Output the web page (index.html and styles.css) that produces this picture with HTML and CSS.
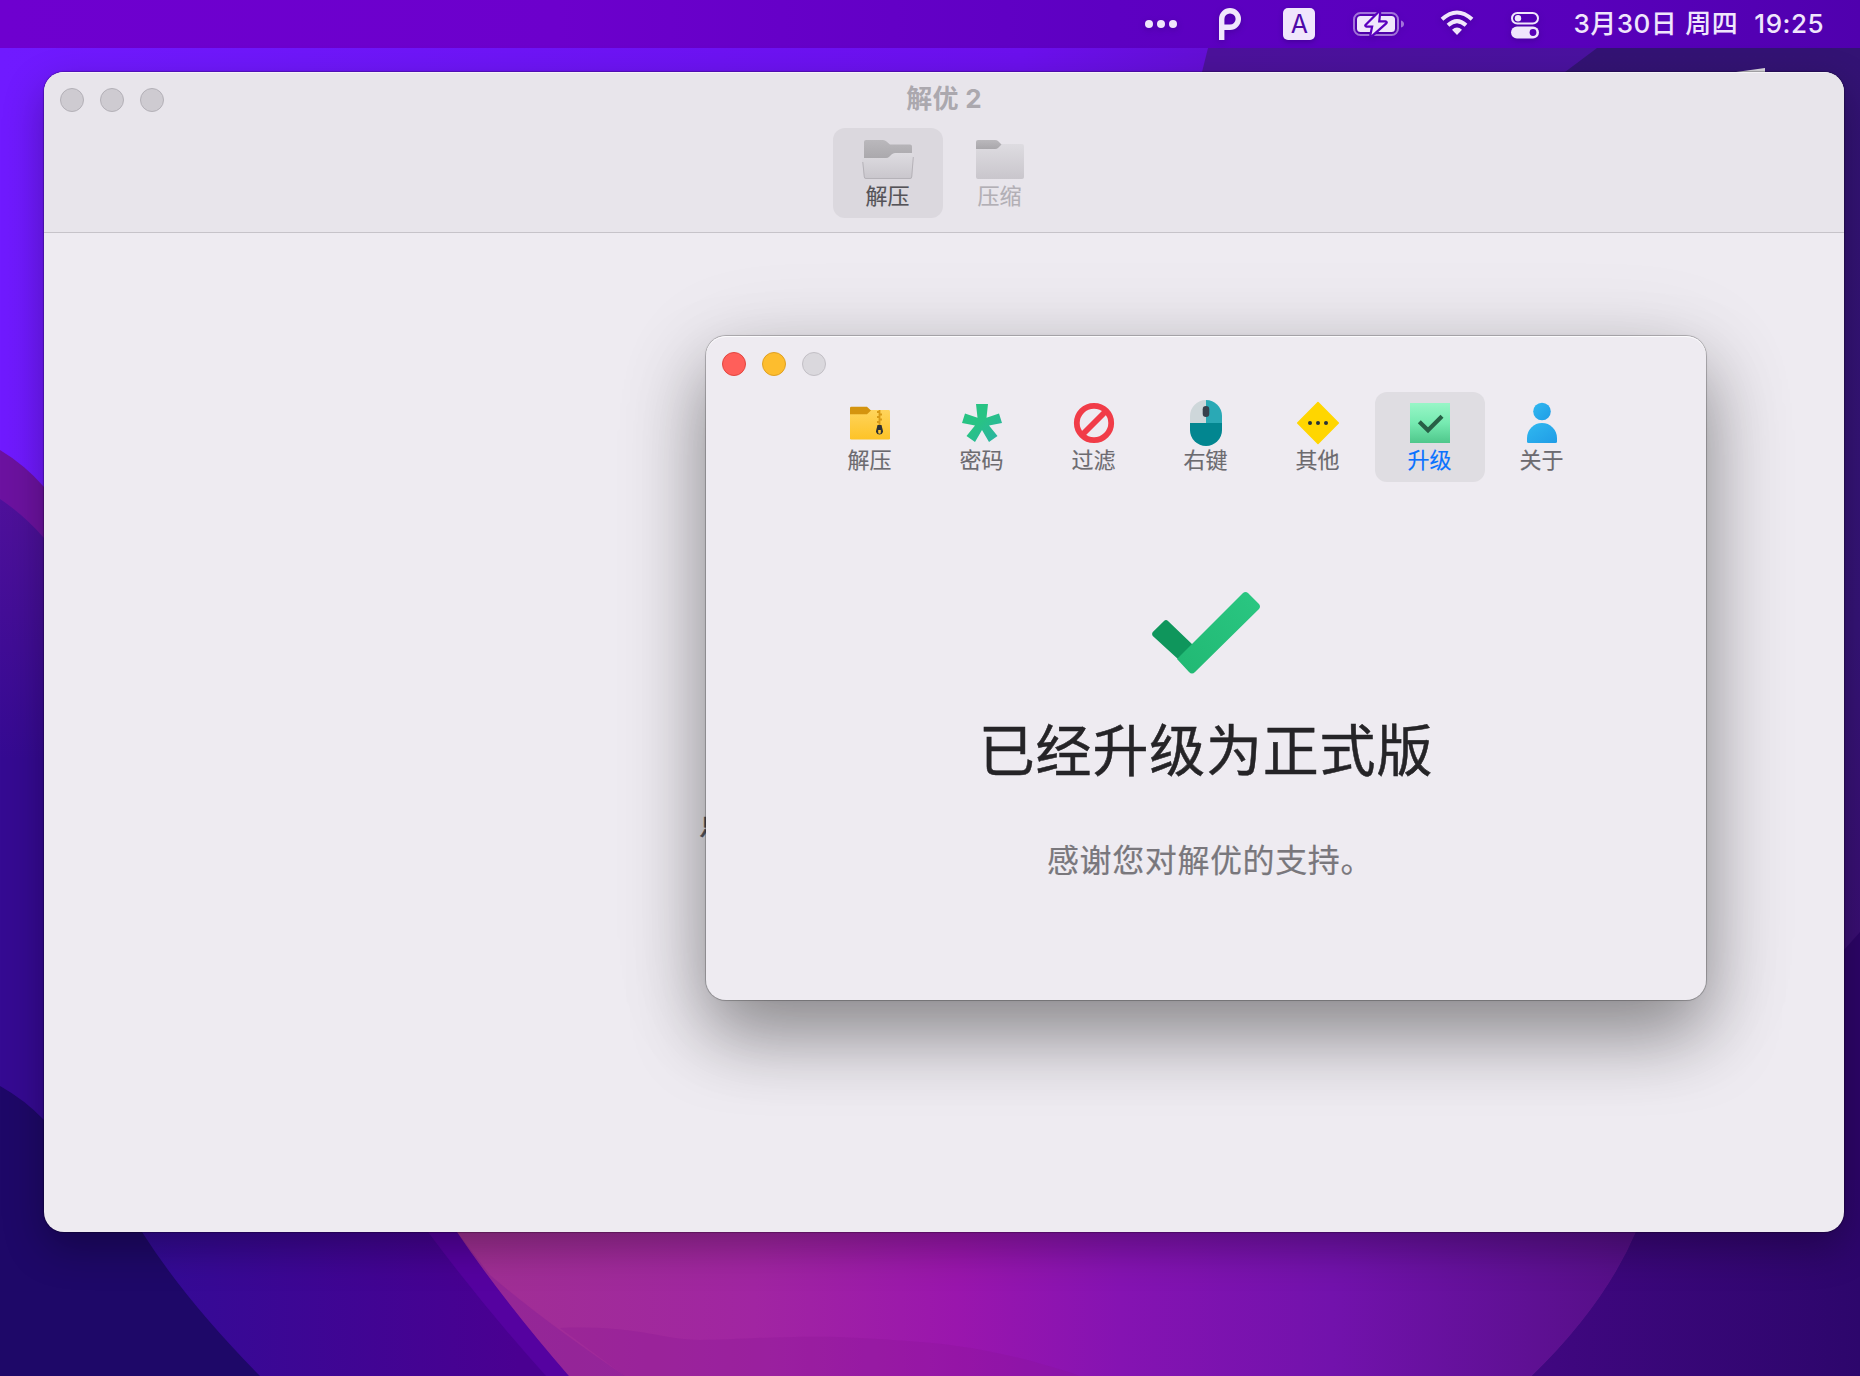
FILE: index.html
```html
<!DOCTYPE html>
<html lang="zh-CN">
<head>
<meta charset="utf-8">
<title>解优 2</title>
<link rel="stylesheet" href="styles.css">
</head>
<body>
<div class="desktop">
  <svg class="wallpaper" viewBox="0 0 1860 1376" aria-hidden="true">
    <defs>
      <linearGradient id="sky" x1="0" x2="1"><stop offset="0" stop-color="#701aff"/><stop offset=".55" stop-color="#6c10ee"/><stop offset=".65" stop-color="#640fd6"/></linearGradient>
      <linearGradient id="hillLeft" gradientUnits="userSpaceOnUse" x1="0" y1="500" x2="0" y2="760"><stop offset="0" stop-color="#4f119b"/><stop offset="1" stop-color="#350a92"/></linearGradient>
      <linearGradient id="valley" gradientUnits="userSpaceOnUse" x1="142" y1="0" x2="520" y2="0"><stop offset="0" stop-color="#330b96"/><stop offset="1" stop-color="#4a0091"/></linearGradient>
      <linearGradient id="pink" gradientUnits="userSpaceOnUse" x1="460" y1="0" x2="1640" y2="0"><stop offset="0" stop-color="#a03093"/><stop offset=".25" stop-color="#a125a2"/><stop offset=".42" stop-color="#9a16ad"/><stop offset=".56" stop-color="#8513b2"/><stop offset=".74" stop-color="#7212ac"/><stop offset="1" stop-color="#540f86"/></linearGradient>
      <linearGradient id="dusk" gradientUnits="userSpaceOnUse" x1="1540" y1="0" x2="1860" y2="0"><stop offset="0" stop-color="#400780"/><stop offset="1" stop-color="#2d066c"/></linearGradient>
      <linearGradient id="ridge" gradientUnits="userSpaceOnUse" x1="1210" y1="0" x2="1600" y2="0"><stop offset="0" stop-color="#4c129b"/><stop offset="1" stop-color="#4a12a0"/></linearGradient>
      <linearGradient id="rightEdge" gradientUnits="userSpaceOnUse" x1="0" y1="48" x2="0" y2="940"><stop offset="0" stop-color="#331374"/><stop offset=".65" stop-color="#361478"/><stop offset="1" stop-color="#3a0f74"/></linearGradient>
    </defs>
    <path fill="url(#sky)" d="M0 0H1860V1376H0z"/>
    <path fill="url(#ridge)" d="M1220 0L1208 48L1202 72L1160 300H1860V0z"/>
    <path fill="url(#rightEdge)" d="M1660 0L1597 48L1565 72L1400 300V1376H1860V0z"/>
    <path fill="#2d0568" d="M1800 970L1844 950L1860 932V1376H1800z"/>
    <path fill="#6c12a0" d="M0 450Q25 465 44 487L460 1232H0z"/>
    <path fill="url(#hillLeft)" d="M0 499Q24 515 44 538L428 1232H0z"/>
    <path fill="url(#valley)" d="M90 1180H430Q480 1290 560 1376H90z"/>
    <path fill="#5502a0" d="M428 1232L400 1180H500L600 1376H546Q483 1306 428 1232z"/>
    <path fill="url(#pink)" d="M430 1180L457 1232Q503 1300 569 1376H1532Q1605 1305 1636 1232L1660 1180z"/>
    <path fill="#7c1698" opacity=".3" d="M457 1232Q503 1300 569 1376H625Q545 1322 490 1275z"/>
    <path fill="#861395" opacity=".25" d="M560 1328C640 1325 660 1340 700 1340S800 1334 860 1338S980 1342 1080 1376H625z"/>
    <path fill="url(#dusk)" d="M1650 1180L1636 1232Q1605 1305 1532 1376H1860V1180z"/>
    <path fill="#1e0868" d="M0 1086Q25 1100 44 1120Q110 1185 142 1232Q185 1300 260 1376H0z"/>
    <path fill="#dcdadf" d="M1736 72L1765 68V76H1736z"/>
  </svg>

  <header class="menubar">
    <svg class="mb-dots" width="32" height="8" viewBox="0 0 32 8"><g fill="currentColor"><circle cx="4" cy="4" r="4"/><circle cx="16" cy="4" r="4"/><circle cx="28" cy="4" r="4"/></g></svg>
    <svg class="mb-p" width="22" height="32" viewBox="0 0 22 32"><path fill="none" stroke="currentColor" stroke-width="5.400" d="M2.700 32V11A8.300 8.300 0 1 1 11 19.300H2.700"/></svg>
    <span class="mb-input">A</span>
    <svg class="mb-battery" width="51" height="26" viewBox="0 0 51 26">
      <rect x="1" y="2" width="44" height="22" rx="6.5" fill="none" stroke="currentColor" stroke-width="2" opacity=".5"/>
      <path d="M48 9.500Q51 10.500 51 13T48 16.500z" fill="currentColor" opacity=".5"/>
      <rect x="4" y="5" width="38" height="16" rx="3.500" fill="currentColor"/>
      <path d="M26 2L13.500 14.500H20.500L18.500 24L32.500 11.500H25z" fill="currentColor" stroke="#5b00bf" stroke-width="4.500" paint-order="stroke" stroke-linejoin="round"/>
    </svg>
    <svg class="mb-wifi" width="34" height="26" viewBox="0 0 34 26"><g fill="none" stroke="currentColor" stroke-width="4"><path d="M2 9.300Q17-4.300 32 9.300"/><path d="M8 15.300Q17 7 26 15.300"/></g><path fill="currentColor" d="M12 19.700Q17 15.500 22 19.700L17 25z"/></svg>
    <svg class="mb-control" width="28" height="27" viewBox="0 0 28 27"><rect x="1" y="1" width="26" height="10.500" rx="5.250" fill="none" stroke="currentColor" stroke-width="2"/><circle cx="7" cy="6.200" r="3.200" fill="currentColor"/><rect y="14.500" width="28" height="12" rx="6" fill="currentColor"/><circle cx="22" cy="20.500" r="3.400" fill="#5700b8"/></svg>
    <div class="clock"><span>3月30日</span><span>周四</span><span>19:25</span></div>
  </header>

  <section class="window main-window">
    <div class="titlebar">
      <div class="lights"><i></i><i></i><i></i></div>
      <h1>解优 2</h1>
      <nav class="toolbar">
        <div class="tool active">
          <svg width="52" height="40" viewBox="0 0 52 40">
            <defs><linearGradient id="g1" x2="0" y2="1"><stop stop-color="#bab8bc"/><stop offset="1" stop-color="#a9a7ab"/></linearGradient><linearGradient id="g2" x2="0" y2="1"><stop stop-color="#dedce1"/><stop offset="1" stop-color="#c9c6cc"/></linearGradient></defs>
            <path fill="url(#g1)" d="M2 20V2Q2 0 4 0H21Q23 0 24.500 1.500L28 4.500H48Q50 4.500 50 6.500V20z"/>
            <path fill="url(#g2)" d="M0 20Q0 18 2 18H24Q26 18 27.500 16.500L29.500 14.500Q31 13 33 13H50Q52 13 52 15L50 37Q50 39 48 39H4Q2 39 2 37z"/>
            <path fill="none" stroke="#b5b2b8" stroke-width="1" d="M.8 22L2.300 37Q2.500 38.500 4 38.500H48Q49.500 38.500 49.700 37L51.300 17"/>
          </svg><span>解压</span>
        </div>
        <div class="tool">
          <svg width="48" height="40" viewBox="0 0 48 40">
            <path fill="url(#g2)" d="M0 8L24 4H46Q48 4 48 6V37Q48 39 46 39H2Q0 39 0 37z"/>
            <path fill="url(#g1)" d="M0 9V2Q0 0 2 0H19Q21 0 22 1L25.500 4.500L22 8Q21 9 19 9z"/>
          </svg><span>压缩</span>
        </div>
      </nav>
    </div>
    <div class="drop-area"><p>点</p></div>
  </section>

  <section class="window dialog">
    <div class="lights"><i class="close"></i><i class="minimize"></i><i></i></div>
    <nav class="toolbar">
      <div class="tool">
        <svg width="40" height="48" viewBox="0 0 40 48">
          <defs><linearGradient id="y1" x2="0" y2="1"><stop stop-color="#ffd45c"/><stop offset="1" stop-color="#fdc327"/></linearGradient></defs>
          <rect y="11" width="40" height="29.500" rx="1.300" fill="url(#y1)"/>
          <path fill="#d4940f" d="M0 15.300V9Q0 7.700 1.300 7.700H17L21 11.500L17 15.300z"/>
          <path fill="none" stroke="#d89a16" stroke-width="1.800" d="M29.500 11V26M27 13H29.500M29.500 15.500H32M27 18H29.500M29.500 20.500H32M27 23H29.500"/>
          <path fill="#2c3035" fill-rule="evenodd" d="M27.500 26H31.500L33 32V33A3.700 3.700 0 0 1 26 33V32zM28.200 31V33.500A1.300 1.300 0 0 0 30.800 33.500V31z"/>
        </svg><span>解压</span>
      </div>
      <div class="tool">
        <svg width="40" height="48" viewBox="0 0 40 48">
          <defs><linearGradient id="s1" x2="1" y2="1"><stop offset=".45" stop-color="#28c384"/><stop offset="1" stop-color="#2bb1a8"/></linearGradient></defs>
          <path fill="url(#s1)" d="M14 5H26L24.500 18.800L37 14.500L40 24L27 26.500L35.500 37L27 43L20 31L13 43L4.500 37L13 26.500L0 24L3 14.500L15.500 18.800z"/>
        </svg><span>密码</span>
      </div>
      <div class="tool">
        <svg width="42" height="48" viewBox="0 0 42 48"><g fill="none" stroke="#f13c48" stroke-width="5.800"><circle cx="21" cy="24" r="17.200"/><path d="M9 36L33 12"/></g></svg><span>过滤</span>
      </div>
      <div class="tool">
        <svg width="32" height="48" viewBox="0 0 32 48">
          <path fill="#ced7da" d="M16 1V24H0V17A16 16 0 0 1 16 1z"/><path fill="#2aa9b5" d="M16 1A16 16 0 0 1 32 17V24H16z"/><path fill="#028690" d="M0 24H32V31A16 16 0 0 1 0 31z"/><rect x="12.700" y="7" width="6.600" height="11" rx="3.300" fill="#37404b"/>
        </svg><span>右键</span>
      </div>
      <div class="tool">
        <svg width="42" height="48" viewBox="0 0 42 48"><path fill="#ffd600" stroke="#ffd600" stroke-width="1.500" stroke-linejoin="round" d="M21 3.500L41.300 24L21 44.500L.7 24z"/><g fill="#263238"><circle cx="13" cy="24" r="2"/><circle cx="21" cy="24" r="2"/><circle cx="29" cy="24" r="2"/></g></svg><span>其他</span>
      </div>
      <div class="tool active">
        <svg width="40" height="48" viewBox="0 0 40 48">
          <defs><linearGradient id="k1" x2="0" y2="1"><stop stop-color="#98f6c7"/><stop offset=".5" stop-color="#76eab1"/><stop offset="1" stop-color="#4fc78b"/></linearGradient></defs>
          <path fill="url(#k1)" d="M0 4H40V44H0z"/><path fill="none" stroke="#285f46" stroke-width="4.200" d="M9.300 22.700L18 31.300L32 17.300"/>
        </svg><span>升级</span>
      </div>
      <div class="tool">
        <svg width="30" height="48" viewBox="0 0 30 48">
          <defs><linearGradient id="u1" x2="1" y2="1"><stop stop-color="#30b9f0"/><stop offset="1" stop-color="#209ce6"/></linearGradient></defs>
          <g fill="url(#u1)"><circle cx="15" cy="12.500" r="8.800"/><path d="M0 39A15 15 0 0 1 30 39V42.500Q30 44 28.500 44H1.500Q0 44 0 42.500z"/></g>
        </svg><span>关于</span>
      </div>
    </nav>
    <div class="upgrade">
      <svg width="108" height="84" viewBox="0 0 108 84">
        <defs><linearGradient id="c1" x1="1" y1="0" x2="0" y2="1"><stop stop-color="#2ac782"/><stop offset="1" stop-color="#21b873"/></linearGradient></defs>
        <path fill="#0f965c" d="M.8 45Q-.6 43 .8 41L12 30Q14 28 16 30L41 54L27 69z"/>
        <path fill="url(#c1)" d="M25 68L91 2Q93.500 0 96 2L107 13Q109 15.500 107 18L43 81Q40 84 37 81z"/>
      </svg>
      <h2>已经升级为正式版</h2>
      <p>感谢您对解优的支持。</p>
    </div>
  </section>
</div>
</body>
</html>
```

FILE: styles.css
```css
* { box-sizing: border-box; margin: 0; padding: 0; }
body { font-family: Inter, "Noto Sans CJK SC", sans-serif; }
svg { display: block; flex: none; }

.desktop { position: relative; width: 1860px; height: 1376px; overflow: hidden; }
.wallpaper { position: absolute; inset: 0; width: 1860px; height: 1376px; }

.menubar {
  position: relative;
  display: flex;
  justify-content: flex-end;
  align-items: center;
  height: 48px;
  padding-right: 36px;
  color: #f0e6fc;
  background: linear-gradient(90deg, #6e00cf 0%, #6c00cc 30%, #5d00c2 60%, #5800bb 85%, #5000ae 100%);
}
.menubar svg { filter: drop-shadow(0 2px 3px rgba(30, 0, 90, .3)); }
.mb-dots { margin-right: 42px; }
.mb-p { margin-right: 42px; }
.mb-input {
  width: 32px; height: 32px; margin-right: 38px;
  border-radius: 5px;
  background: #f0e6fc; color: #4d0aa8;
  font-size: 25px; line-height: 32px; text-align: center;
  box-shadow: 0 2px 5px rgba(30, 0, 90, .35);
}
.mb-battery { margin-right: 36px; }
.mb-wifi { margin-right: 37px; transform: translateY(-1px); }
.mb-control { margin: 2px 34px 0 0; }
.clock { display: flex; gap: 8px; font-size: 26px; font-weight: 500; line-height: 46px; letter-spacing: .5px; white-space: nowrap; }
.clock span:last-child { margin-left: 8px; }

.window { position: absolute; border-radius: 20px; background: #eeebf1; }
.main-window {
  left: 44px; top: 72px; width: 1800px; height: 1160px;
  overflow: hidden;
  box-shadow: 0 0 1px 1px rgba(0, 0, 0, .25), 0 16px 40px rgba(0, 0, 0, .3);
}
.titlebar {
  position: relative;
  height: 161px;
  padding-top: 8px;
  background: #e8e5eb;
  border-bottom: 1px solid #c6c3c9;
  box-shadow: inset 0 1px #f5f3f7;
}
.lights { display: flex; gap: 16px; height: 24px; }
.titlebar .lights { position: absolute; left: 16px; top: 16px; }
.lights i { width: 24px; height: 24px; border: 1px solid #b3b0b7; border-radius: 50%; background: #cecbd1; }
.titlebar h1 { height: 40px; font-size: 26px; font-weight: 700; line-height: 38px; letter-spacing: .3px; text-align: center; color: #aba8ae; }

.toolbar { display: flex; justify-content: center; gap: 2px; }
.tool {
  display: flex; flex-direction: column; align-items: center;
  width: 110px; height: 90px;
  border-radius: 12px;
  font-size: 22px; line-height: 30px; color: #6c6a6f;
  -webkit-text-stroke: .15px;
}
.tool span { padding-right: 1px; }
.titlebar .toolbar { padding-top: 8px; }
.titlebar .tool { padding-top: 12px; color: #b2afb5; }
.titlebar .tool svg + span { margin-top: 1px; }
.titlebar .tool.active { background: #dbd8de; color: #555358; }
.drop-area { padding-top: 567px; }
.drop-area p { width: 490px; margin: 0 auto; font-size: 32px; line-height: 46px; color: #5c5a5f; -webkit-text-stroke: .5px; }

.dialog {
  left: 706px; top: 336px; width: 1000px; height: 664px;
  padding: 16px 16px 0;
  box-shadow: inset 0 1px #fcfbfd, 0 0 0 1px rgba(0, 0, 0, .2), 0 0 3px rgba(0, 0, 0, .1), 0 36px 72px rgba(0, 0, 0, .36), 0 16px 100px rgba(0, 0, 0, .12);
}
.dialog .lights i { background: #dad8dd; border-color: #c2bfc5; }
.dialog .lights .close { background: #ff5f5a; border-color: #e2463f; }
.dialog .lights .minimize { background: #fdbd2e; border-color: #dfa023; }
.dialog .toolbar { padding-top: 16px; }
.dialog .tool { padding-top: 7px; }
.dialog .tool span { margin-top: -2px; }
.dialog .tool.active { background: #dfdde2; color: #0a72ff; }

.upgrade { display: flex; flex-direction: column; align-items: center; padding-top: 109px; }
.upgrade h2 { margin-top: 34px; font-size: 56px; font-weight: 400; line-height: 84px; letter-spacing: .8px; color: #252427; -webkit-text-stroke: .5px; }
.upgrade p { margin-top: 45px; padding-left: 8px; font-size: 32px; line-height: 46px; letter-spacing: .6px; color: #79777c; -webkit-text-stroke: .2px; }
```
